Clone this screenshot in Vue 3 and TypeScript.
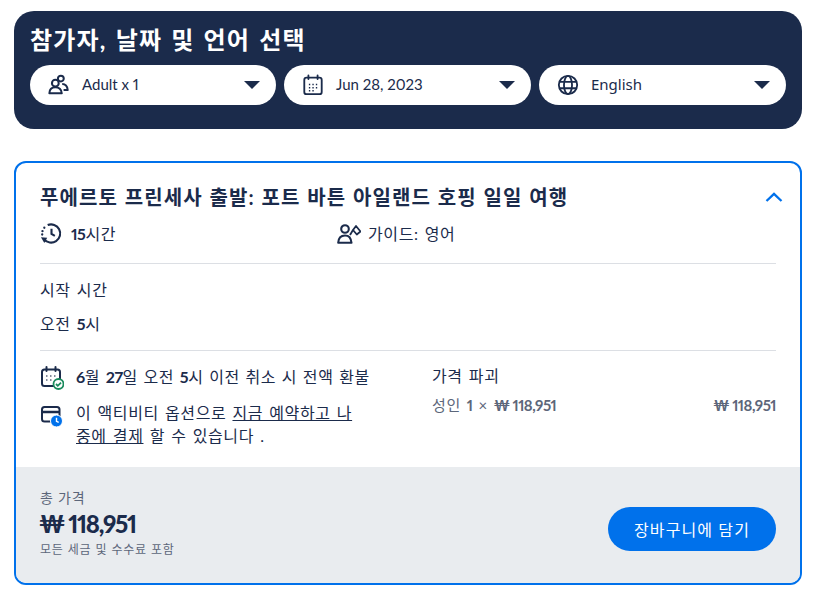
<script setup lang="ts">
interface Pill { label: string; icon: string }
const pills: Pill[] = [
  { label: 'Adult x 1', icon: 'people' },
  { label: 'Jun 28, 2023', icon: 'cal' },
  { label: 'English', icon: 'globe' },
]
</script>

<template>
  <div class="page">
    <section class="picker">
      <h1>참가자, 날짜 및 언어 선택</h1>
      <div class="pills">
        <div v-for="p in pills" :key="p.label" class="pill">
          <svg v-if="p.icon === 'people'" class="pill-ico" viewBox="0 0 24 24" fill="none" stroke="#1b2b4b" stroke-width="2.200">
            <circle cx="14" cy="5" r="3.200" />
            <circle cx="8" cy="10" r="3.700" fill="#fff" />
            <path d="M1.500 21c.2-4.500 2.500-6.500 6.500-6.500s6.500 2 7 6.500z" fill="#fff" stroke-linejoin="round" />
            <path d="M15.500 11c3.500 0 5.500 2 6 6.500h-4.500" stroke-linejoin="round" />
          </svg>
          <svg v-else-if="p.icon === 'cal'" class="pill-ico" viewBox="0 0 24 24" fill="none" stroke="#1b2b4b" stroke-width="2">
            <rect x="2.500" y="4" width="19" height="18" rx="2.500" />
            <path d="M7 1.500v4M17 1.500v4" stroke-linecap="round" />
            <path d="M7.500 11.500h1.500M11.300 11.500h1.500M15.100 11.500h1.500M7.500 15h1.500M11.300 15h1.500M15.100 15h1.500M7.500 18.300h1.500M11.300 18.300h1.500" stroke-width="1.500" />
          </svg>
          <svg v-else class="pill-ico" viewBox="0 0 24 24" fill="none" stroke="#1b2b4b" stroke-width="2">
            <circle cx="12" cy="12" r="10" />
            <ellipse cx="12" cy="12" rx="4.400" ry="10" />
            <path d="M3 8.500h18M3 15.500h18" />
          </svg>
          <span class="pill-label" :class="{ alt: p.icon === 'globe' }">{{ p.label }}</span>
          <span class="caret"></span>
        </div>
      </div>
    </section>

    <section class="card">
      <div class="card-body">
        <div class="title-row">
          <h2>푸에르토 프린세사 출발: 포트 바튼 아일랜드 호핑 일일 여행</h2>
          <svg class="chev" viewBox="0 0 18 10" fill="none" stroke="#0071eb" stroke-width="2.300">
            <path d="M1.500 9L9 1.800 16.500 9" />
          </svg>
        </div>
        <div class="meta">
          <div class="meta-item">
            <svg class="meta-ico" viewBox="0 0 24 24" fill="none" stroke="#1b2b4b" stroke-width="2.200">
              <path d="M8 3.200A9.500 9.500 0 1 1 4.200 18" />
              <path d="M2.600 9.500v.1M2.300 13v.1M4.500 6v.1" stroke-linecap="round" stroke-width="2.400" />
              <path d="M12 7v5.500l3.500 2" />
              <path d="M1 16l6.500.5-3 5.500z" fill="#1b2b4b" stroke="none" />
            </svg>
            <span><b class="num">15</b>시간</span>
          </div>
          <div class="meta-item guide">
            <svg class="guide-ico" viewBox="0 0 24 20" fill="none" stroke="#1b2b4b" stroke-width="2.100">
              <circle cx="8" cy="5" r="3.800" />
              <path d="M1.200 18.800c.3-4.700 2.800-7.300 6.800-7.300 2 0 3.500.6 4.600 1.800 1 1.300 1.700 3 1.900 5.500z" stroke-linejoin="round" />
              <path d="M16 6l3-4 4.500 5.500-3.700 3z" stroke-linejoin="round" stroke-width="1.800" />
              <path d="M13 11l3-5" stroke-width="1.800" />
            </svg>
            <span>가이드: 영어</span>
          </div>
        </div>
        <hr />
        <p class="start-label">시작 시간</p>
        <p class="start-value">오전 <b class="num">5</b>시</p>
        <hr class="second" />
        <div class="columns">
          <div class="policies">
            <div class="policy first">
              <svg class="policy-ico" viewBox="0 0 24 24" fill="none">
                <rect x="2" y="3.500" width="18" height="16.500" rx="2.500" stroke="#1b2b4b" stroke-width="2" />
                <path d="M6.500 1v4M15.500 1v4" stroke="#1b2b4b" stroke-width="2" stroke-linecap="round" />
                <path d="M6 10h1.500M10 10h1.500M14 10h1.500M6 14h1.500M10 14h1.500" stroke="#5c667a" stroke-width="1.600" />
                <circle cx="18.500" cy="18" r="5" fill="#fff" stroke="#1a8a5c" stroke-width="1.800" />
                <path d="M16 18l1.800 1.800 3.200-3.200" stroke="#1a8a5c" stroke-width="1.800" />
              </svg>
              <p><b class="num">6</b>월 <b class="num">27</b>일 오전 <b class="num">5</b>시 이전 취소 시 전액 환불</p>
            </div>
            <div class="policy">
              <svg class="policy-ico" viewBox="0 0 24 24" fill="none">
                <rect x="2" y="3" width="17.500" height="14.500" rx="2.500" stroke="#1b2b4b" stroke-width="2" />
                <path d="M2 8h17.500" stroke="#1b2b4b" stroke-width="2.500" />
                <circle cx="16.500" cy="17" r="6" fill="#0071eb" stroke="#fff" stroke-width="1" />
                <path d="M16.500 13.800v3.500l2.200 1.100" stroke="#fff" stroke-width="1.400" />
              </svg>
              <p>이 액티비티 옵션으로 <u>지금 예약하고 나중에 결제</u> 할 수 있습니다 .</p>
            </div>
          </div>
          <div class="breakdown">
            <p class="bd-title">가격 파괴</p>
            <div class="bd-row">
              <span>성인 <b class="amt">1</b> × <b class="amt">₩ 118,951</b></span>
              <b class="amt">₩ 118,951</b>
            </div>
          </div>
        </div>
      </div>
      <footer class="total">
        <div>
          <p class="total-label">총 가격</p>
          <p class="total-price">₩ 118,951</p>
          <p class="total-note">모든 세금 및 수수료 포함</p>
        </div>
        <button class="cart" type="button">장바구니에 담기</button>
      </footer>
    </section>
  </div>
</template>

<style scoped>
.page {
  width: 821px;
  box-sizing: border-box;
  padding: 11px 19px 0 14px;
  font-family: "Lato", "Noto Sans CJK KR", sans-serif;
  font-variant-numeric: proportional-nums;
  color: #1b2b4b;
}
p, h1, h2 { margin: 0; }
.num { letter-spacing: -0.5px; word-spacing: 0; }
.amt { letter-spacing: -0.5px; word-spacing: 0; }
.picker {
  background: #1b2b4b;
  border-radius: 20px;
  height: 118px;
  box-sizing: border-box;
  padding: 13px 16px 0;
}
h1 {
  color: #fff;
  font-size: 24px;
  line-height: 32px;
  font-weight: 700;
  letter-spacing: 1.2px;
  word-spacing: 2px;
}
.pills {
  display: grid;
  grid-template-columns: 246px 247px 247px;
  gap: 8px;
  margin-top: 9px;
}
.pill {
  height: 40px;
  background: #fff;
  border-radius: 20px;
  display: flex;
  align-items: center;
  padding: 0 16px 0 18px;
  font-size: 15px;
}
.pill-ico { width: 22px; height: 22px; flex: none; }
.pill-label { margin-left: 12px; flex: 1; padding-bottom: 3px; }
.pill-label.alt { font-family: "Noto Sans", sans-serif; padding-bottom: 2px; }
.caret {
  width: 0;
  height: 0;
  border-left: 8px solid transparent;
  border-right: 8px solid transparent;
  border-top: 8px solid #1b2b4b;
}
.card {
  margin-top: 32px;
  border: 2px solid #0071eb;
  border-radius: 12px;
  overflow: hidden;
  height: 424px;
  box-sizing: border-box;
  display: flex;
  flex-direction: column;
}
.card-body {
  flex: 1;
  padding: 20px 24px 0;
  letter-spacing: 0.6px;
  word-spacing: 1.5px;
}
.title-row {
  display: flex;
  justify-content: space-between;
  align-items: center;
  height: 28px;
}
h2 { font-size: 20px; font-weight: 700; line-height: 28px; letter-spacing: 1.1px; word-spacing: 0.8px; white-space: nowrap; }
.chev { width: 18px; height: 10px; margin-right: -7px; }
.meta { display: flex; margin-top: 9px; font-size: 16px; height: 26px; align-items: center; }
.meta-item { display: flex; align-items: center; gap: 8px; width: 297px; }
.meta-ico { width: 23px; height: 23px; flex: none; }
.guide-ico { width: 24px; height: 20px; flex: none; margin-top: 2px; margin-right: -1px; }
hr { border: 0; border-top: 1px solid #dcdfe4; margin: 17px 0 0; }
.start-label { font-size: 16px; line-height: 24px; margin-top: 14px; }
.start-value { font-size: 16px; line-height: 24px; margin-top: 10px; }
hr.second { margin-top: 14px; }
.columns { display: flex; margin-top: 14px; }
.policies { width: 392px; flex: none; }
.policy { display: flex; gap: 12px; font-size: 16px; line-height: 23px; width: 318px; }
.policy.first { width: 340px; white-space: nowrap; word-spacing: 1px; }
.policy + .policy { margin-top: 11px; }
.policy-ico { width: 24px; height: 24px; flex: none; margin-top: 1px; }
.policy + .policy .policy-ico { margin-top: 3px; }
.breakdown { flex: 1; margin-top: -2px; }
.bd-title { font-size: 16px; line-height: 26px; }
.bd-row {
  display: flex;
  justify-content: space-between;
  font-size: 15px;
  line-height: 22px;
  margin-top: 5px;
  color: #5c667a;
}
.total {
  height: 116px;
  flex: none;
  background: #e9ecef;
  display: flex;
  justify-content: space-between;
  align-items: center;
  padding: 0 24px;
}
.total-label { font-size: 14px; line-height: 20px; color: #5c667a; margin-top: -2px; letter-spacing: 0.8px; }
.total-price { font-size: 24px; line-height: 32px; font-weight: 900; letter-spacing: -1.3px; margin-left: -1px; }
.total-note { font-size: 12px; line-height: 20px; color: #5c667a; letter-spacing: 0.7px; word-spacing: 0.5px; }
.cart {
  width: 168px;
  height: 44px;
  border: 0;
  border-radius: 22px;
  background: #0071eb;
  color: #fff;
  font: inherit;
  font-size: 16px;
  letter-spacing: 1.1px;
  margin-top: 8px;
}
</style>
